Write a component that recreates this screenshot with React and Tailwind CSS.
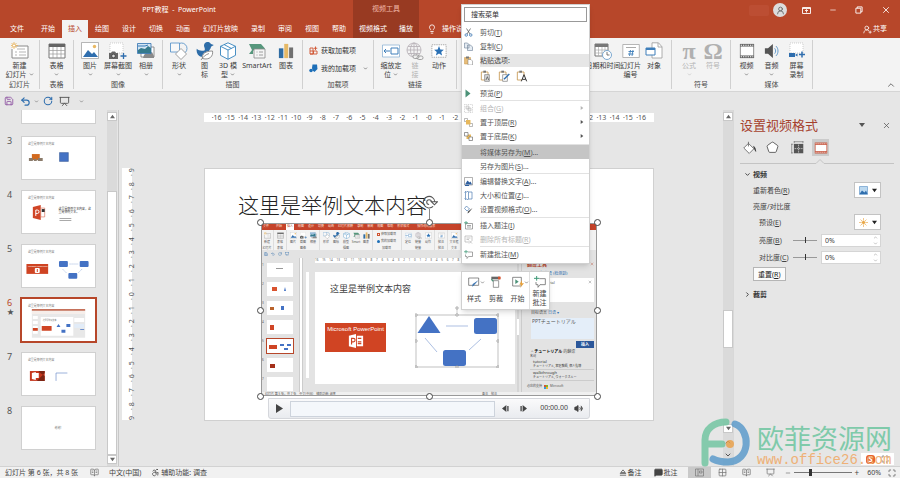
import { useState } from "react";
import {
	Accessibility,
	BookOpenText,
	ChevronDown,
	ChevronRight,
	ChevronUp,
	Grid2x2,
	Lightbulb,
	Maximize,
	MessageSquare,
	Minus,
	Pentagon,
	Presentation,
	RotateCw,
	Save,
	Undo2,
	UserRound,
	UserRoundPlus,
	Volume2,
	X,
} from "lucide-react";

const Svg = ({ size = 18, box = 18, children }) => (
	<svg
		width={size}
		height={size}
		viewBox={`0 0 ${box} ${box}`}
		fill="none"
		className="shrink-0"
		aria-hidden="true"
	>
		{children}
	</svg>
);

/* ---------- ribbon icons ---------- */

const icons = {
	newSlide: (
		<>
			<path d="M3 4h14v12H1V7" fill="#fff" stroke="#8a8a8a" />
			<path d="M6 7h8M4 10h2M8 10h7M4 13h2M8 13h7" stroke="#b5b5b5" />
			<path d="M3 0v7M0 3.500h7M.5 1l5 5M5.500 1l-5 5" stroke="#e8b35a" strokeWidth=".8" />
			<circle cx="3" cy="3.500" r="1.500" fill="#fff" stroke="#e8b35a" strokeWidth=".8" />
		</>
	),
	table: (
		<>
			<path d="M1 2h16v14H1z" fill="#fff" stroke="#777" />
			<path d="M1 2h16v3H1z" fill="#666" />
			<path d="M1 8.500h16M1 12h16M5 5v11M9 5v11M13 5v11" stroke="#999" strokeWidth=".7" />
		</>
	),
	picture: (
		<>
			<path d="M.5.5h17v16H.5z" fill="#fff" stroke="#9a9a9a" strokeWidth=".7" />
			<circle cx="13.500" cy="4.500" r="1.700" fill="#e9b862" />
			<path d="M2 15l5-7 4 4 2-2 4 5z" fill="#2f6eae" />
		</>
	),
	screenshot: (
		<>
			<path d="M1 1h13v10H1z" fill="#fff" stroke="#bbb" strokeDasharray="1 1" strokeWidth=".7" />
			<path d="M0 11h2l1-1.500h3L7 11h2v6H0z" fill="#666" />
			<circle cx="4.500" cy="14" r="1.800" fill="#ddd" stroke="#333" strokeWidth=".7" />
			<path d="M14.500 11v6M11.500 14h6" stroke="#2f6eae" strokeWidth="1.300" />
		</>
	),
	album: (
		<>
			<path d="M4 5h13v10H4z" fill="#fff" stroke="#777" strokeWidth=".8" />
			<path d="M7 13l4-4 2 2 2-1 2 4v2H6z" fill="#8a8a8a" />
			<path d="M.5 1.500H14v10H.5z" fill="#d6e6f3" stroke="#2f6eae" strokeWidth=".8" />
			<path d="M1 11V8l3-2 4 1 3-3 3 2v5z" fill="#357a8c" />
			<path d="M1 4h7l3-1" stroke="#357ab8" />
		</>
	),
	shapes: (
		<>
			<circle cx="11.500" cy="6.500" r="5.500" fill="#f3f3f3" stroke="#4b8bc5" strokeWidth=".8" />
			<path d="M.5 1h9v9h-9z" fill="#f8f8f8" stroke="#4b8bc5" strokeWidth=".8" />
			<path d="M11 6.500l5.500 5.500L11 17.500 5.500 12z" fill="#fff" stroke="#8a8a8a" strokeWidth=".8" />
		</>
	),
	duck: (
		<>
			<path
				d="M8 3.500a3.700 3.700 0 0 1 7-1.500l2.800 1L15 4.800c0 2-1.500 2.700-2 4.200-3 0-6 2-7.500 6C1.500 14 0 10 .8 6.800 3 8.800 5 9 8.500 8.500 9.500 7 8 5 8 3.500z"
				fill="#2e6da8"
			/>
			<path d="M6.500 16.500c-1-4.500 3-7.500 10-7.500 1 5-3 9.500-10 7.500z" fill="#fff" stroke="#777" strokeWidth=".8" />
			<path d="M5 18c2-3 4-5 8-6.500" stroke="#777" strokeWidth=".8" />
		</>
	),
	cube: (
		<g stroke="#3483bd" strokeWidth=".9">
			<path d="M9 .8l7.500 3.500v9L9 17.300l-7.500-4v-9z" fill="#fff" />
			<path d="M1.500 4.300L9 8l7.500-3.700M9 8v9.300M5 2.500l7.500 4" />
		</g>
	),
	smartArt: (
		<>
			<path d="M1 2h12l4 4.500-2 2H5V12H1l3-4z" fill="#56977c" />
			<path d="M6 7h11v9H6z" fill="#f5f5f5" stroke="#888" strokeWidth=".8" />
			<path d="M8.500 10h1M11 10h4M8.500 13h1M11 13h4" stroke="#888" strokeWidth=".8" />
		</>
	),
	chart: (
		<>
			<path d="M1 6h5v11H1z" fill="#2f6ca3" />
			<path d="M7 1h4.500v16H7z" fill="#e6b966" />
			<path d="M12.500 5H17v12h-4.500z" fill="#707070" />
		</>
	),
	zoomLink: (
		<>
			<path d="M.5 3h17v12H.5z" fill="#fff" stroke="#8fb4d4" strokeWidth=".8" />
			<path d="M9 6h7v6H9z" stroke="#3f7fba" />
			<path d="M8 9H2m2-2L2 9l2 2" stroke="#3f7fba" />
		</>
	),
	globe: (
		<g stroke="#b9b3b9" strokeWidth=".9">
			<circle cx="8" cy="8" r="7" />
			<ellipse cx="8" cy="8" rx="3.500" ry="7" />
			<path d="M1 8h14M2 4.500h12M2 11.500h12M8 1v14" />
			<rect x="7" y="13" width="6" height="3.500" rx="1.700" fill="#eee" stroke="#999" />
			<rect x="11" y="14" width="6" height="3.500" rx="1.700" stroke="#999" />
		</g>
	),
	action: (
		<>
			<path d="M1 2h16v14H1z" fill="#fff" stroke="#888" strokeDasharray="1.500 1" strokeWidth=".8" />
			<path d="M9 3.500l1.500 3.800 4 .2-3 2.600 1 4L9 11.800l-3.500 2.300 1-4-3-2.600 4-.2z" fill="#2b71b5" />
		</>
	),
	dateTime: (
		<>
			<path d="M1 2h13v12H1z" fill="#fff" stroke="#777" />
			<path d="M1 2h13v3H1z" fill="#777" />
			<path d="M1 8h13M1 11h13M4.500 5v9M8 5v9M11 5v9" stroke="#aaa" strokeWidth=".7" />
			<circle cx="13" cy="13" r="4.500" fill="#fff" stroke="#7aa7cf" />
			<path d="M13 10v3h2.500" stroke="#555" strokeWidth=".8" />
		</>
	),
	slideNumber: (
		<>
			<path d="M.8 2.500h16.500v13H.8z" fill="#fff" stroke="#a5a5a5" strokeWidth=".8" />
			<path d="M4 5.500h10" stroke="#aaa" />
			<path d="M6.500 9.500h5.500M6 12h5.500M8.500 8l-1 6M11 8l-1 6" stroke="#3f7fba" strokeWidth=".9" />
		</>
	),
	object: (
		<>
			<path d="M7 .8h6.500l3.500 4V16H7z" fill="#fff" stroke="#999" strokeWidth=".8" />
			<path d="M13 1v4h4" stroke="#999" strokeWidth=".8" />
			<path d="M1 6h9v7H1z" fill="#fff" stroke="#3f7fba" />
			<path d="M1 6h9v2H1z" fill="#3f7fba" />
		</>
	),
	video: (
		<>
			<path d="M1 1h16v16H1z" fill="#666" />
			<path d="M1.800 4h14.400v10H1.800z" fill="#fff" />
			<path d="M2 2.500h14M2 15.500h14" stroke="#fff" strokeWidth="1.300" strokeDasharray="1.300 1.300" />
		</>
	),
	audio: (
		<>
			<path d="M1 6h3.500L10 1v16l-5.500-5H1z" fill="#555" />
			<path d="M12 6c1.500 2 1.500 4 0 6M13.500 3.500c3 3 3 8 0 11" stroke="#5490c5" />
		</>
	),
	record: (
		<>
			<path d="M2 1h13v10H2z" fill="#fff" stroke="#bbb" strokeDasharray="1 1" strokeWidth=".7" />
			<path d="M1 11h6v4H1zM7 13l2.500-1.500v3z" fill="#2f6eae" />
			<path d="M14 9.500v6M11 12.500h6" stroke="#2f6eae" strokeWidth="1.500" />
		</>
	),
};

const Glyph = ({ children }) => (
	<span className="flex h-[18px] items-center font-['Liberation_Serif',serif] text-[24px] font-bold text-[#b0b0b0]">
		{children}
	</span>
);

const Caret = ({ className = "" }) => (
	<ChevronDown size={5} strokeWidth={2.5} className={`inline-block shrink-0 ${className}`} />
);

const RibbonButton = ({ icon, lines, width, caret, disabled, size = 18 }) => (
	<button
		className={`flex shrink-0 flex-col items-center text-[7px] leading-[9px] whitespace-nowrap ${width} ${
			disabled ? "text-[#b3b3b3]" : "text-[#3b3b3b]"
		}`}
		disabled={disabled}
	>
		<span className="mb-[1px] flex h-[18px] items-center">
			{typeof icon === "string" ? <Svg size={size}>{icons[icon]}</Svg> : icon}
		</span>
		{lines.map((line, i) => (
			<span key={line} className="flex items-center justify-center gap-[2px]">
				{line}
				{caret === "inline" && i === lines.length - 1 && <Caret />}
			</span>
		))}
		{caret === "below" && (
			<span className="flex h-[9px] items-center">
				<Caret />
			</span>
		)}
	</button>
);

const RibbonGroup = ({ label, pad = "", children }) => (
	<section className="my-[2px] flex shrink-0 flex-col border-r border-[#d0d0d0] pt-[2px]">
		<div className={`flex flex-1 ${pad}`}>{children}</div>
		<h2 className="h-[9px] text-center text-[7px] leading-[9px] text-[#4a4a4a]">{label}</h2>
	</section>
);

const Ribbon = () => (
	<div className="flex h-[54px] border-b border-[#d5d5d5] bg-[#f3f3f3]">
		<RibbonGroup label="幻灯片">
			<RibbonButton icon="newSlide" lines={["新建", "幻灯片"]} width="w-[39px]" caret="inline" />
		</RibbonGroup>
		<RibbonGroup label="表格">
			<RibbonButton icon="table" lines={["表格"]} width="w-[33px]" caret="below" />
		</RibbonGroup>
		<RibbonGroup label="图像" pad="px-[2px]">
			<RibbonButton icon="picture" lines={["图片"]} width="w-[28px]" caret="below" />
			<RibbonButton icon="screenshot" lines={["屏幕截图"]} width="w-[28px]" caret="below" />
			<RibbonButton icon="album" lines={["相册"]} width="w-[28px]" caret="below" />
		</RibbonGroup>
		<RibbonGroup label="插图" pad="pl-[2px] pr-[4px]">
			<RibbonButton icon="shapes" lines={["形状"]} width="w-[28px]" caret="below" />
			<RibbonButton icon="duck" lines={["图", "标"]} width="w-[23px]" />
			<RibbonButton icon="cube" lines={["3D 模", "型"]} width="w-[24px]" caret="inline" />
			<RibbonButton icon="smartArt" lines={["SmartArt"]} width="w-[34px]" />
			<RibbonButton icon="chart" lines={["图表"]} width="w-[24px]" size={16} />
		</RibbonGroup>
		<RibbonGroup label="加载项" pad="w-[70px] flex-col gap-[9px] pt-[4px] pl-[6px]">
			<button className="flex items-center gap-[3px] text-[7px] leading-[9px] text-[#333]">
				<Svg size={9}>
					<path d="M2 4h6v12H2zM2 10h14v6H2M9 10v6M13 1v7M9.500 4.500h7" stroke="#cf5330" strokeWidth="1.800" />
				</Svg>
				获取加载项
			</button>
			<button className="flex items-center gap-[3px] text-[7px] leading-[9px] text-[#333]">
				<Svg size={9}>
					<path d="M7 1h9l1 9-6 6-4-3-1-5z" fill="#1d6fb8" />
					<circle cx="4" cy="13" r="3.500" fill="#1d6fb8" />
				</Svg>
				我的加载项
				<Caret className="ml-[4px]" />
			</button>
		</RibbonGroup>
		<RibbonGroup label="链接" pad="pl-[5px] pr-[5px]">
			<RibbonButton icon="zoomLink" lines={["缩放定", "位"]} width="w-[24px]" caret="inline" />
			<RibbonButton icon="globe" lines={["链", "接"]} width="w-[24px]" disabled />
			<RibbonButton icon="action" lines={["动作"]} width="w-[24px]" size={16} />
		</RibbonGroup>
		<RibbonGroup label="文本" pad="pr-[4px] pl-[129px]">
			<RibbonButton icon="dateTime" lines={["日期和时间"]} width="w-[34px]" />
			<RibbonButton icon="slideNumber" lines={["幻灯片", "编号"]} width="w-[21px]" />
			<RibbonButton icon="object" lines={["对象"]} width="w-[26px]" />
		</RibbonGroup>
		<RibbonGroup label="符号" pad="px-[5px]">
			<RibbonButton icon={<Glyph>π</Glyph>} lines={["公式"]} width="w-[24px]" caret="below" disabled />
			<RibbonButton icon={<Glyph>Ω</Glyph>} lines={["符号"]} width="w-[24px]" disabled />
		</RibbonGroup>
		<RibbonGroup label="媒体" pad="px-[3px]">
			<RibbonButton icon="video" lines={["视频"]} width="w-[25px]" caret="below" size={16} />
			<RibbonButton icon="audio" lines={["音频"]} width="w-[25px]" caret="below" size={16} />
			<RibbonButton icon="record" lines={["屏幕", "录制"]} width="w-[25px]" />
		</RibbonGroup>
		<button className="mt-auto mr-[4px] mb-[1px] ml-auto text-[#555]" aria-label="折叠功能区">
			<ChevronUp size={10} strokeWidth={2} />
		</button>
	</div>
);

/* ---------- title bar and tabs ---------- */

const tabs = ["开始", "插入", "绘图", "设计", "切换", "动画", "幻灯片放映", "录制", "审阅", "视图", "帮助"];

const Header = () => {
	const [active, setActive] = useState("插入");
	return (
		<header className="flex h-[38px] bg-[#b7472a] text-[7px] text-white">
			<div className="flex shrink-0 flex-col">
				<h1 className="h-[20px] pl-[6px] text-center leading-[20px]">PPT教程&nbsp; -&nbsp; PowerPoint</h1>
				<nav className="flex h-[18px] gap-[1px]">
					<button className="px-[10px]">文件</button>
					{tabs.map((tab) => (
						<button
							key={tab}
							onClick={() => setActive(tab)}
							className={`px-[6px] ${tab === active ? "bg-[#f3f3f3] text-[#b7472a]" : ""}`}
						>
							{tab}
						</button>
					))}
				</nav>
			</div>
			<div className="ml-[1px] flex shrink-0 flex-col bg-[#983a22]">
				<p className="h-[20px] text-center leading-[18px] text-[#f0b8a8]">视频工具</p>
				<nav className="flex h-[18px]">
					<button className="px-[6px]">视频格式</button>
					<button className="px-[6px]">播放</button>
				</nav>
			</div>
			<div className="flex flex-1 flex-col">
				<div className="flex h-[20px] items-center justify-end pr-[9px]">
					<span className="mr-[4px] h-[11px] w-[20px] rounded-[2px] bg-[#bc4e33]" />
					<button
						className="flex size-[14px] items-center justify-center rounded-full bg-[#dcdcdc] text-[#555]"
						aria-label="账户"
					>
						<UserRound size={9} />
					</button>
					<button className="ml-[15px]" aria-label="功能区显示选项">
						<Svg size={9}>
							<path d="M1 3h16v12H1zM1 5h16M9 13V8M6 10l3-3 3 3" stroke="#fff" strokeWidth="1.800" />
						</Svg>
					</button>
					<button className="ml-[18px]" aria-label="最小化">
						<Minus size={8} />
					</button>
					<button className="ml-[18px]" aria-label="还原">
						<Svg size={8}>
							<path d="M5 5V2h11v11h-3M2 5h11v11H2z" stroke="#fff" strokeWidth="2" />
						</Svg>
					</button>
					<button className="ml-[18px]" aria-label="关闭">
						<X size={10} />
					</button>
				</div>
				<div className="flex h-[18px] items-center justify-between pr-[13px] pl-[8px]">
					<button className="flex items-center gap-[5px]">
						<Lightbulb size={10} />
						操作说明搜索
					</button>
					<button className="flex items-center gap-[1px]">
						<UserRoundPlus size={9} />
						共享
					</button>
				</div>
			</div>
		</header>
	);
};

const QuickAccess = () => (
	<div className="flex h-[18px] items-center bg-[#e6e6e6] pl-[4px] text-[#555]">
		<button aria-label="保存">
			<Save size={10} className="text-[#8c4fa0]" />
		</button>
		<button className="ml-[6px]" aria-label="撤消">
			<Undo2 size={11} strokeWidth={2.5} className="text-[#2f6eae]" />
		</button>
		<Caret className="ml-[3px]" />
		<button className="ml-[4px]" aria-label="恢复">
			<RotateCw size={10} strokeWidth={2.5} className="text-[#2f6eae]" />
		</button>
		<button className="ml-[6px]" aria-label="从头开始放映">
			<Presentation size={11} />
		</button>
		<Caret className="ml-[9px]" />
	</div>
);

/* ---------- slide thumbnails ---------- */

const Arrow = ({ d }) => <path d={d} stroke="#7c9bd2" strokeWidth=".5" strokeDasharray="1.500 .5" />;

const PptMark = ({ x, y }) => (
	<g transform={`translate(${x} ${y})`}>
		<path d="M0 2l8-2v15l-8-2z" fill="#d04526" />
		<path d="M8 3h4v9H8z" fill="#fff" stroke="#d04526" strokeWidth=".5" />
		<path d="M9 4h3v3H9z" fill="#333" />
		<path d="M3 11V5h1.500a1.700 1.700 0 0 1 0 3.500H3" stroke="#fff" />
	</g>
);

const Thumb = ({ children, title = true }) => (
	<svg viewBox="0 0 74 42" className="block h-[42px] w-full bg-white" fill="none">
		{title && (
			<text x="6" y="8" fontSize="3" fill="#777">
				这里是举例文本内容
			</text>
		)}
		{children}
	</svg>
);

const thumbs = [
	{
		n: 3,
		art: (
			<>
				<path d="M10 17h8v6h-8z" fill="#d2691e" />
				<path d="M7 21h4v3H7zM12 22h3v2h-3zM16 21h5v3h-5z" fill="#8b7b6b" />
				<path d="M38 15.500h9v9h-9z" fill="#4472c4" stroke="#2f528f" strokeWidth=".5" />
			</>
		),
	},
	{
		n: 4,
		art: (
			<>
				<PptMark x={11} y={14} />
				<text x="37" y="19" fontSize="3" fill="#333">
					这里是举例文本内容，这
				</text>
				<text x="37" y="22" fontSize="3" fill="#333">
					里是举例文本。
				</text>
				<path d="M38 27h12v1H38zM38 29h12v1H38z" fill="#aaa" />
			</>
		),
	},
	{
		n: 5,
		art: (
			<>
				<path d="M4.500 19h22v10h-22z" fill="#cf4423" />
				<text x="6" y="22" fontSize="2" fill="#fff">
					Microsoft PowerPoint
				</text>
				<rect x="13" y="23" width="5" height="5" rx="1" fill="#fff" />
				<path d="M15 24h1v3h-1z" fill="#cf4423" />
				<rect x="37.500" y="16" width="9" height="6" rx="1" fill="#4472c4" />
				<rect x="58.500" y="16" width="9" height="6" rx="1" fill="#4472c4" />
				<rect x="47" y="28" width="9" height="6" rx="1" fill="#4472c4" />
				<Arrow d="M48 19h9M61 24l-4 4M45 28l-4-4" />
			</>
		),
	},
	{
		n: 6,
		art: (
			<>
				<path d="M10 10h54v29H10z" fill="#e8e8e8" />
				<path d="M10 10h54v1.500H10z" fill="#b7472a" />
				<path d="M10 11.500h54V15H10z" fill="#f6eeea" />
				<path d="M19 18h33v19H19zM11 17h5v3h-5zM11 22h5v3h-5zM11 27h5v3h-5zM11 32h5v3h-5zM53 19h10v4H53z" fill="#fff" />
				<path d="M20 27h10v5H20zM11 29h5v3h-5z" fill="#cf4423" />
				<path d="M35 28l2-3 2 3zM45 25h4v3h-4zM40 31h4v3h-4zM59 30h4v1h-4z" fill="#4472c4" />
				<path d="M53 25h10v4H53z" fill="#e2ecf8" />
				<text x="21" y="22" fontSize="2" fill="#777">
					这里是举例文本
				</text>
			</>
		),
	},
	{
		n: 7,
		art: (
			<>
				<path d="M8 18h15v10H8z" fill="#c5371d" />
				<path d="M15 28l8-8v8zM17 19l6 4v-5h-6z" fill="#7d2514" />
				<path d="M10 20l4-1v8l-4-1zM14 20h3v5h-3z" fill="#fff" />
				<path d="M34.500 28v-8H46" stroke="#6f8fca" strokeWidth=".7" />
			</>
		),
	},
	{
		n: 8,
		title: false,
		art: (
			<text x="33" y="22" fontSize="3" fill="#777">
				谢谢!
			</text>
		),
	},
];

const ThumbPanel = ({ current, onSelect }) => (
	<aside className="w-[107px] shrink-0 overflow-hidden bg-[#e6e6e6]">
		<div className="mb-[12px] ml-[21px] h-[14px] w-[75px] border border-t-0 border-[#cfcfcf] bg-white" />
		<ol>
			{thumbs.map(({ n, title, art }) => (
				<li key={n} className="mb-[10px] flex h-[44px] items-center">
					<span
						className={`w-[20px] self-start pl-[7px] text-[9px] leading-[9px] ${
							n === current ? "text-[#b7472a]" : "text-[#555]"
						}`}
					>
						{n}
						{n === 6 && <span className="block text-[7px] leading-[9px] text-[#555]">★</span>}
					</span>
					<button
						onClick={() => onSelect(n)}
						aria-label={`幻灯片 ${n}`}
						className={
							n === current ? "w-[77px] border-2 border-[#b7472a]" : "mx-[1px] w-[75px] border border-[#d0d0d0]"
						}
					>
						<Thumb title={title}>{art}</Thumb>
					</button>
				</li>
			))}
		</ol>
	</aside>
);

const Scrollbar = ({ before, thumb, after, children }) => (
	<div className="flex w-[10px] shrink-0 flex-col bg-[#dadada] py-[2px]">
		<button className="flex h-[9px] items-center justify-center border border-[#c8c8c8] bg-white" aria-label="向上滚动">
			<Svg size={5} box={6}>
				<path d="M0 5l3-4 3 4z" fill="#666" />
			</Svg>
		</button>
		<div className={before} />
		<div className={`border border-[#c8c8c8] bg-white ${thumb}`} />
		<div className={after} />
		<button className="flex h-[9px] items-center justify-center border border-[#c8c8c8] bg-white" aria-label="向下滚动">
			<Svg size={5} box={6}>
				<path d="M0 1l3 4 3-4z" fill="#666" />
			</Svg>
		</button>
		{children}
	</div>
);

/* ---------- video placed on the slide ---------- */

const miniGroups = [
	{ label: "幻灯片", items: [["newSlide", "新建"]] },
	{ label: "表格", items: [["table", "表格"]] },
	{ label: "图像", items: [["picture", "图片"], ["screenshot", "截图"], ["album", "相册"]] },
	{ label: "插图", items: [["shapes", "形状"], ["duck", "图标"], ["cube", "模型"], ["smartArt", "Smart"], ["chart", "图表"]] },
];

const miniGroupsRight = [
	{ label: "链接", items: [["zoomLink", "定位"], ["globe", "链接"], ["action", "动作"]] },
	{ label: "批注", items: [["slideNumber", "批注"]] },
	{ label: "文本", items: [["picture", "文本框"]] },
];

const MiniGroup = ({ label, items }) => (
	<div className="flex shrink-0 flex-col justify-between border-r border-[#ddd] px-[1px] pt-[2px] text-center">
		<div className="flex">
			{items.map(([icon, text]) => (
				<span key={text} className="flex w-[10px] flex-col items-center gap-[1px]">
					<Svg size={7}>{icons[icon]}</Svg>
					{text}
				</span>
			))}
		</div>
		<span>{label}</span>
	</div>
);

const MiniDiagram = () => (
	<svg viewBox="0 0 84 62" className="w-[84px] shrink-0" fill="none">
		<path d="M42 8V2" stroke="#999" strokeWidth=".5" />
		<path d="M1 9h82v52H1z" stroke="#999" strokeWidth=".6" />
		<path d="M14 10l11.500 17h-23z" fill="#4472c4" />
		<rect x="59" y="12" width="23" height="16" rx="2.500" fill="#4472c4" />
		<rect x="28" y="44" width="23" height="16" rx="2.500" fill="#4472c4" />
		<path d="M31 20h22M66 33L54 44M22 46L10 32" stroke="#8aa5d6" strokeWidth=".7" />
		{[
			[1, 9],
			[42, 9],
			[83, 9],
			[1, 35],
			[83, 35],
			[1, 61],
			[42, 61],
			[83, 61],
			[42, 2],
		].map(([x, y]) => (
			<circle key={`${x}-${y}`} cx={x} cy={y} r="1.200" fill="#fff" stroke="#777" strokeWidth=".6" />
		))}
	</svg>
);

const VideoFrame = () => (
	<div className="flex h-[173px] flex-col overflow-hidden bg-[#e3e3e3] text-[3px] leading-[4px] text-[#555]">
		<div className="flex h-[7px] items-stretch gap-[4px] bg-[#c5432a] px-[2px] text-[3px] leading-[7px] whitespace-nowrap text-[#ffe2da]">
			<span className="mr-[3px]">文件</span>
			<span>开始</span>
			<span className="bg-white px-[1px] text-[#b7472a]">插入</span>
			<span>绘图</span>
			<span>设计</span>
			<span>切换</span>
			<span>动画</span>
			<span>幻灯片放映</span>
			<span>录制</span>
			<span>审阅</span>
			<span>视图</span>
			<span>帮助</span>
			<span>形状格式</span>
			<span className="ml-[4px]">操作说明搜索</span>
		</div>
		<div className="flex h-[20px] bg-[#f3f3f3]">
			{miniGroups.map((group) => (
				<MiniGroup key={group.label} {...group} />
			))}
			<div className="flex w-[29px] shrink-0 flex-col justify-between border-r border-[#ddd] pt-[2px] pl-[4px]">
				<span className="flex items-center gap-[1px]">
					<span className="size-[3px] border border-[#cf5330]" />
					获取加载项
				</span>
				<span className="flex items-center gap-[1px]">
					<span className="size-[3px] rounded-full bg-[#1d6fb8]" />
					我的加载项
				</span>
				<span className="pl-[5px]">加载项</span>
			</div>
			{miniGroupsRight.map((group) => (
				<MiniGroup key={group.label} {...group} />
			))}
		</div>
		<div className="flex h-[8px] items-center gap-[3px] pl-[3px] text-[#2f6eae]">
			<Save size={4} />
			<Undo2 size={4} />
			<RotateCw size={4} />
			<Presentation size={4} />
		</div>
		<div className="flex min-h-0 flex-1">
			<div className="flex w-[38px] shrink-0 flex-col gap-[5px] pt-[5px] pl-[1px]">
				{[1, 2, 3, 4, 5, 6, 7].map((n) => (
					<div key={n} className="flex gap-[3px]">
						<span className="w-[2px]">{n}</span>
						<svg viewBox="0 0 26 14" className={`w-[26px] bg-white ${n === 5 ? "outline-1 outline-[#b7472a]" : ""}`}>
							{n === 1 && <path d="M9 5h7v1H9z" fill="#999" />}
							{n === 2 && <path d="M5 5h5v4H5z" fill="#d9532f" />}
							{n === 2 && <path d="M18 5l1 4h-2z" fill="#4472c4" />}
							{n === 3 && <path d="M3 6h4v3H3z" fill="#b9622b" />}
							{n === 3 && <path d="M14 5h3v4h-3z" fill="#4472c4" />}
							{n === 4 && <path d="M3 5h4v5H3z" fill="#d04526" />}
							{n === 5 && <path d="M2 6h8v4H2z" fill="#cf4423" />}
							{n === 5 && <path d="M13 5h4v2h-4zM20 5h4v2h-4zM17 9h4v2h-4z" fill="#4472c4" />}
							{n === 6 && <path d="M3 6h5v4H3z" fill="#a5301a" />}
						</svg>
					</div>
				))}
			</div>
			<div className="w-[4px] shrink-0 border-x border-[#ccc] bg-white" />
			<div className="my-[14px] ml-[3px] w-[3px] shrink-0 bg-white" />
			<div className="flex min-w-0 flex-1 flex-col pl-[6px]">
				<div className="mb-[9px] flex h-[5px] justify-between bg-white leading-[5px]">
					{Array.from({ length: 33 }, (_, i) => (
						<span key={i}>{Math.abs(16 - i)}</span>
					))}
				</div>
				<div className="h-[112px] bg-white pt-[12px] pr-[16px] pl-[10px]">
					<p className="ml-[5px] text-[9px] leading-[9px] text-[#444]">这里是举例文本内容</p>
					<div className="mt-[13px] flex items-start justify-between">
						<div className="mt-[17px] flex h-[29px] w-[61px] shrink-0 flex-col items-center bg-[#d04423] pt-[3px] text-white">
							<p className="font-['Liberation_Sans',sans-serif] text-[6px] leading-[7px] whitespace-nowrap">
								Microsoft PowerPoint
							</p>
							<Svg size={16}>
								<path d="M1 3l8-2v16l-8-2zM10 3h7v12h-7z" fill="#fff" />
								<path d="M4 13V6h2a2 2 0 0 1 0 4H4M11 6h4M11 10h4M11 12h4" stroke="#d04423" strokeWidth="1.300" />
							</Svg>
						</div>
						<MiniDiagram />
					</div>
				</div>
			</div>
			<div className="mx-[2px] flex w-[2px] shrink-0 items-center bg-[#d5d5d5]">
				<span className="mt-[4px] h-[16px] w-full bg-white" />
			</div>
			<div className="w-[76px] shrink-0 border-l border-[#ccc] pt-[4px] pr-[3px] pl-[5px] text-[4px] leading-[5px] whitespace-nowrap">
				<p className="flex justify-between text-[5px] font-bold text-[#b7472a]">
					翻译工具 <X size={4} />
				</p>
				<div className="ml-[4px]">
					<p className="mt-[4px] text-[#2f6eae]">源语言 英语 (检测到)</p>
					<div className="mt-[2px] flex h-[24px] justify-between bg-white p-[2px]">
						PPT tutorial <X size={4} />
					</div>
					<p className="mt-[8px] text-[#2f6eae]">
						<span className="text-[#555]">目标语言</span> 日语 ▾
					</p>
					<div className="mt-[3px] h-[21px] bg-[#e4eef9] pt-[1px] pl-[1px] text-[5px]">PPTチュートリアル</div>
					<div className="mt-[2px] ml-auto h-[7px] w-[18px] bg-[#2b579a] text-center font-bold leading-[7px] text-white">
						插入
					</div>
					<p className="mt-[1px]">
						^ <b className="text-black">チュートリアル</b> 的翻译
					</p>
				</div>
				<div className="ml-[3px] text-[3px] text-[#333]">
					<p>名词</p>
					<p className="pl-[3px] text-[4px]">tutorial</p>
					<p className="border-b border-[#ccc] pl-[3px]">チュートリアル, 家庭教師, 個人指導</p>
					<p className="pl-[3px] text-[4px]">walkthrough</p>
					<p className="border-b border-[#ccc] pl-[3px]">チュートリアル, ウォークスルー</p>
				</div>
				<p className="mt-[3px] flex items-center gap-[2px] text-[3px]">
					必应的支持
					<Svg size={4} box={4}>
						<path d="M0 0h2v2H0z" fill="#d9532f" />
						<path d="M2 0h2v2H2z" fill="#7db928" />
						<path d="M0 2h2v2H0z" fill="#2f9be0" />
						<path d="M2 2h2v2H2z" fill="#f2b52a" />
					</Svg>
					Microsoft
				</p>
			</div>
		</div>
		<div className="flex h-[4px] items-center justify-between bg-[#f0f0f0] pr-[100px] pl-[4px] text-[3px]">
			<span>幻灯片 第 5 张，共 7 张　中文(中国)　辅助功能: 调查</span>
			<span>备注　批注</span>
		</div>
	</div>
);

const Handle = ({ at }) => (
	<span className={`absolute size-[7px] rounded-full border border-[#444] bg-white ${at}`} />
);

const SelectedVideo = () => (
	<div className="relative outline-1 -outline-offset-1 outline-[#999]">
		<VideoFrame />
		<span className="absolute -top-[14px] left-1/2 h-[14px] w-px bg-[#888]" />
		<span className="absolute -top-[28px] left-1/2 -ml-[7px]">
			<Svg size={16}>
				<path
					d="M14.500 8A6.500 6.500 0 1 0 12.500 12.800M10.700 8A2.700 2.700 0 1 0 8 10.700M10.500 7.500h7L14 11z"
					stroke="#555"
					strokeWidth="1.200"
				/>
			</Svg>
		</span>
		<Handle at="-top-[4px] -left-[4px]" />
		<Handle at="-top-[4px] left-1/2 -ml-[3px]" />
		<Handle at="-top-[4px] -right-[4px]" />
		<Handle at="top-1/2 -left-[4px] -mt-[3px]" />
		<Handle at="top-1/2 -right-[4px] -mt-[3px]" />
		<Handle at="-bottom-[4px] -left-[4px]" />
		<Handle at="-bottom-[4px] left-1/2 -ml-[3px]" />
		<Handle at="-right-[4px] -bottom-[4px]" />
	</div>
);

const PlayerBar = () => (
	<div className="mx-[63px] mt-[2px] flex h-[21px] items-center rounded-b-[3px] border border-[#d5d7dc] bg-linear-to-b from-[#fafafb] to-[#e9ebef] px-[6px] text-[#444]">
		<button aria-label="播放">
			<Svg size={9} box={9}>
				<path d="M1 0l7 4.500L1 9z" fill="#444" />
			</Svg>
		</button>
		<div className="ml-[6px] h-[16px] flex-1 border border-[#cdd3dc] bg-[#f4f7fb]" />
		<button className="ml-[7px]" aria-label="后退">
			<Svg size={7} box={8}>
				<path d="M5 0v8L0 4zM6 1h1.500v6H6z" fill="#444" />
			</Svg>
		</button>
		<button className="ml-[11px]" aria-label="前进">
			<Svg size={7} box={8}>
				<path d="M3 0v8l5-4zM.5 1H2v6H.5z" fill="#444" />
			</Svg>
		</button>
		<span className="ml-[13px] text-[7px]">00:00.00</span>
		<button className="ml-[6px]" aria-label="音量">
			<Volume2 size={9} fill="#444" />
		</button>
	</div>
);

const rulerNumbers = (max) => Array.from({ length: max * 2 + 1 }, (_, i) => Math.abs(max - i));

const Editor = () => (
	<main className="flex min-w-0 flex-1 bg-[#e6e6e6]">
		<div className="mt-[58px] ml-[3px] flex h-[252px] w-[9px] shrink-0 rotate-180 justify-between bg-white py-[5px] text-[7px] leading-[9px] text-[#555] [writing-mode:vertical-rl]">
			{rulerNumbers(9).map((n, i) => (
				<span key={i}>{i === 0 ? n : `· ${n}`}</span>
			))}
		</div>
		<div className="flex min-w-0 flex-1 flex-col pr-[69px] pl-[72px]">
			<div className="mt-[3px] flex h-[9px] bg-white px-[6px] text-[7px] leading-[9px] text-[#555]">
				{rulerNumbers(16).map((n, i) => (
					<span key={i} className="w-0 flex-1 text-center whitespace-nowrap">
						·{n}
					</span>
				))}
			</div>
			<article className="mt-[46px] border border-[#d0d0d0] bg-white pb-[1px]">
				<h2 className="mt-[24px] mb-[6px] ml-[33px] text-[21px] leading-[24px] font-light whitespace-nowrap text-[#222]">
					这里是举例文本内容
				</h2>
				<div className="mx-[56px]">
					<SelectedVideo />
				</div>
				<PlayerBar />
			</article>
		</div>
	</main>
);

/* ---------- format pane ---------- */

const SliderRow = ({ label, hotkey, id }) => {
	const [value, setValue] = useState(0);
	return (
		<div className="mb-[3px] flex h-[14px] items-center pl-[6px]">
			<label htmlFor={id} className="flex-1">
				{label}(<u>{hotkey}</u>)
			</label>
			<input
				type="range"
				min="-100"
				max="100"
				value={value}
				onChange={(e) => setValue(Number(e.target.value))}
				aria-label={label}
				className="mr-[4px] h-px w-[24px] appearance-none bg-[#999] [&::-webkit-slider-thumb]:h-[6px] [&::-webkit-slider-thumb]:w-[1px] [&::-webkit-slider-thumb]:appearance-none [&::-webkit-slider-thumb]:bg-[#333]"
			/>
			<div className="flex h-[13px] w-[60px] items-center border border-[#d5d5d5] bg-white pr-[2px] pl-[3px]">
				<input
					id={id}
					value={`${value}%`}
					onChange={(e) => setValue(parseInt(e.target.value, 10) || 0)}
					className="w-0 flex-1 text-[7px] outline-none"
				/>
				<span className="flex flex-col gap-[1px] text-[#777]">
					<ChevronUp size={5} />
					<ChevronDown size={5} />
				</span>
			</div>
		</div>
	);
};

const DropButton = ({ label, children }) => (
	<button
		aria-label={label}
		className="flex h-[16px] w-[27px] items-center justify-center gap-[4px] border border-[#c3c3c3] bg-white"
	>
		{children}
		<Svg size={5} box={6}>
			<path d="M0 1h6L3 5z" fill="#222" />
		</Svg>
	</button>
);

const FormatPane = () => (
	<aside className="w-[167px] shrink-0 border-l border-[#d8d8d8] bg-[#e6e6e6] px-[6px] pt-[7px] text-[7px] leading-[9px] text-[#444]">
		<div className="flex items-center text-[#555]">
			<h2 className="flex-1 text-[13px] leading-[16px] text-[#a5402d]">设置视频格式</h2>
			<button aria-label="任务窗格选项">
				<Svg size={6} box={6}>
					<path d="M0 1h6L3 5z" fill="#555" />
				</Svg>
			</button>
			<button className="mr-[3px] ml-[17px]" aria-label="关闭窗格">
				<X size={9} />
			</button>
		</div>
		<div className="mt-[6px] flex items-center">
			<button className="ml-[3px]" aria-label="填充与线条">
				<Svg size={14}>
					<path d="M7 3l7 7-6 6-7-7zM7 7V1" fill="#fff" stroke="#666" strokeWidth="1.100" />
					<path d="M13 6c3 1 4 5 4 8-2-1-2-3-3-4z" fill="#444" />
				</Svg>
			</button>
			<button className="ml-[9px]" aria-label="效果">
				<Pentagon size={13} fill="#fff" strokeWidth={1.5} />
			</button>
			<button className="ml-[12px]" aria-label="大小与属性">
				<Svg size={13}>
					<path d="M4 4h13v13H4z" fill="#555" />
					<path d="M10.500 5v11M5 10.500h11" stroke="#ddd" strokeDasharray="2 1" />
					<path d="M1 4v13M4 1h13M0 4.500h3M0 16.500h3M4.500 0v3M16.500 0v3" stroke="#777" />
				</Svg>
			</button>
			<button className="ml-[8px] flex size-[17px] items-center justify-center bg-[#cbcbcb]" aria-label="视频">
				<Svg size={14}>
					<path d="M1 2h16v14H1z" fill="#c5513a" />
					<path d="M2 5h14v8H2z" fill="#fff" />
					<path d="M2 3.500h14M2 14.500h14" stroke="#fff" strokeWidth="1.200" strokeDasharray="1.300 1.300" />
				</Svg>
			</button>
		</div>
		<svg viewBox="0 0 154 8" className="block w-full" fill="none">
			<path d="M0 7.500h76l4-4 4 4h70" stroke="#c4c4c4" />
		</svg>
		<button className="mt-[6px] flex items-center gap-[2px] pl-[4px] font-bold text-[#333]">
			<ChevronDown size={7} strokeWidth={3} />
			视频
		</button>
		<div className="px-[13px]">
			<div className="mt-[3px] flex h-[16px] items-center justify-between">
				<span>
					重新着色(<u>R</u>)
				</span>
				<DropButton label="重新着色">
					<Svg size={9}>
						<path d="M1 1h16v16H1z" fill="#bcd9f0" stroke="#3d7dbb" />
						<path d="M1 16l5-7 5 4 3-4 3 7z" fill="#2f6eae" />
					</Svg>
				</DropButton>
			</div>
			<p className="flex h-[16px] items-center">亮度/对比度</p>
			<div className="mb-[3px] flex h-[16px] items-center justify-between pl-[6px]">
				<span>
					预设(<u>E</u>)
				</span>
				<DropButton label="预设">
					<Svg size={9}>
						<path d="M9 0v18M0 9h18M3 3l12 12M15 3L3 15" stroke="#e9a94a" strokeWidth="1.300" />
						<circle cx="9" cy="9" r="4" fill="#e9a94a" stroke="#fff" />
					</Svg>
				</DropButton>
			</div>
			<SliderRow label="亮度" hotkey="B" id="brightness" />
			<SliderRow label="对比度" hotkey="C" id="contrast" />
			<button className="flex h-[14px] items-center border border-[#b5b5b5] bg-[#fbfbfb] px-[4px] text-[#222]">
				重置(<u>R</u>)
			</button>
		</div>
		<button className="mt-[9px] flex items-center gap-[2px] pl-[4px] font-bold text-[#333]">
			<ChevronRight size={7} strokeWidth={3} />
			裁剪
		</button>
	</aside>
);

/* ---------- status bar ---------- */

const StatusBar = () => (
	<footer className="flex h-[12px] items-center border-t border-[#d2d2d2] bg-[#f1f1f1] pl-[5px] text-[7px] leading-[11px] whitespace-nowrap text-[#444]">
		<span>幻灯片 第 6 张，共 8 张</span>
		<BookOpenText size={9} className="mr-[10px] ml-[12px] text-[#777]" />
		<span>中文(中国)</span>
		<button className="ml-[10px] flex items-center gap-[1px]">
			<Accessibility size={9} />
			辅助功能: 调查
		</button>
		<button className="ml-auto flex items-center gap-[1px]">
			<Svg size={8}>
				<path d="M9 2l5 6H4zM2 10h14M2 14h14" stroke="#555" strokeWidth="1.800" />
			</Svg>
			备注
		</button>
		<button className="ml-[12px] flex items-center gap-[1px]">
			<MessageSquare size={9} fill="#444" />
			批注
		</button>
		<div className="ml-[10px] flex h-[11px] items-center text-[#777]">
			<button className="flex h-full w-[23px] items-center justify-center bg-[#c9c9c9]" aria-label="普通视图">
				<Svg size={9}>
					<path d="M1 2h16v14H1zM6 2v14M9 6h5v4H9z" stroke="#777" strokeWidth="1.400" />
				</Svg>
			</button>
			<button className="flex w-[24px] justify-center" aria-label="幻灯片浏览">
				<Grid2x2 size={9} />
			</button>
			<button className="flex w-[24px] justify-center" aria-label="阅读视图">
				<BookOpenText size={9} />
			</button>
			<button className="flex w-[23px] justify-center" aria-label="幻灯片放映">
				<Presentation size={9} />
			</button>
		</div>
		<button className="ml-[3px]" aria-label="缩小">
			<Minus size={6} />
		</button>
		<input
			type="range"
			min="10"
			max="190"
			defaultValue="60"
			aria-label="缩放级别"
			className="mx-[3px] h-px w-[58px] appearance-none bg-[#777] [&::-webkit-slider-thumb]:h-[7px] [&::-webkit-slider-thumb]:w-[3px] [&::-webkit-slider-thumb]:appearance-none [&::-webkit-slider-thumb]:bg-[#333]"
		/>
		<button aria-label="放大" className="text-[8px]">
			+
		</button>
		<button className="ml-[8px]">60%</button>
		<button className="mr-[4px] ml-[7px]" aria-label="使幻灯片适应当前窗口">
			<Maximize size={8} />
		</button>
	</footer>
);

/* ---------- context menu ---------- */

const menuIcons = {
	cut: (
		<>
			<path d="M5 1l7 11M13 1L6 12" stroke="#555" strokeWidth="1.500" />
			<circle cx="4.500" cy="14" r="2.500" stroke="#2f6eae" strokeWidth="1.500" />
			<circle cx="13.500" cy="14" r="2.500" stroke="#2f6eae" strokeWidth="1.500" />
		</>
	),
	copy: (
		<path d="M1 2h6l3 3v7H1zM7 6h6l4 4v7H7z" fill="#e5ecf3" stroke="#6b7f96" strokeWidth="1.200" />
	),
	paste: (
		<>
			<path d="M1 3h12v13H1z" fill="#e8bd79" stroke="#c79547" />
			<path d="M4 1h6v4H4z" fill="#777" />
			<path d="M8 7h6l3 3v8H8z" fill="#fff" stroke="#777" />
		</>
	),
	play: <path d="M3 1l10 8-10 8z" fill="#4c9278" />,
	group: (
		<>
			<path d="M1 1h16v16H1z" stroke="#aaa" strokeDasharray="2 1.500" />
			<path d="M4 4h6v6H4zM8 8h6v6H8z" stroke="#aaa" fill="#eee" />
		</>
	),
	front: (
		<>
			<path d="M1 1h6v6H1zM11 11h6v6h-6z" fill="#fff" stroke="#777" />
			<path d="M4 4h9v9H4z" fill="#e7b85c" />
		</>
	),
	back: (
		<>
			<path d="M5 5h9v9H5z" fill="#e7b85c" />
			<path d="M1 1h7v7H1zM10 10h7v7h-7z" fill="#fff" stroke="#666" strokeWidth="1.300" />
		</>
	),
	alt: (
		<>
			<path d="M1 1h16v15H1z" fill="#fff" stroke="#666" />
			<path d="M2 15l5-8 4 4 2-2 3 6z" fill="#2f5f9e" />
			<path d="M2 17h8" stroke="#2f5f9e" strokeWidth="2" />
		</>
	),
	size: <path d="M9 2h7v14H9zM3 1v16M1 3l2-2 2 2M1 15l2 2 2-2M5 1h4M5 17h4" stroke="#4274ad" strokeWidth="1.300" />,
	format: (
		<>
			<path d="M5 2l6 6-5 4-5-5z" stroke="#4274ad" strokeWidth="1.300" />
			<path d="M17 6l-7 9-3 2 1-4z" fill="#444" />
		</>
	),
	caption: (
		<>
			<path d="M3 5h14v11H3zM6 9h8M6 12h8" stroke="#777" strokeWidth="1.300" />
			<path d="M4 0v7M0 3.500h8" stroke="#3f9a78" strokeWidth="1.500" />
		</>
	),
	removeCaption: (
		<path d="M2 2h14v9M10 14H2V2M5 6h8M5 9h5M10 11l6 6M16 11l-6 6" stroke="#aaa" strokeWidth="1.300" />
	),
	comment: (
		<>
			<path d="M8 4h9v9H9l-3 4v-4H3V9" stroke="#777" strokeWidth="1.300" />
			<path d="M4 0v7M0 3.500h8" stroke="#3f9a78" strokeWidth="1.500" />
		</>
	),
};

const menuSections = [
	[{ icon: "play", text: "预览", hotkey: "P" }],
	[
		{ icon: "group", text: "组合", hotkey: "G", disabled: true, sub: true },
		{ icon: "front", text: "置于顶层", hotkey: "R", sub: true },
		{ icon: "back", text: "置于底层", hotkey: "K", sub: true },
	],
	[
		{ text: "将媒体另存为", hotkey: "M", dots: true, hot: true },
		{ text: "另存为图片", hotkey: "S", dots: true },
	],
	[
		{ icon: "alt", text: "编辑替换文字", hotkey: "A", dots: true },
		{ icon: "size", text: "大小和位置", hotkey: "Z", dots: true },
		{ icon: "format", text: "设置视频格式", hotkey: "O", dots: true },
	],
	[
		{ icon: "caption", text: "插入题注", hotkey: "I" },
		{ icon: "removeCaption", text: "删除所有标题", hotkey: "R", disabled: true },
	],
	[{ icon: "comment", text: "新建批注", hotkey: "M" }],
];

const MenuItem = ({ icon, text, hotkey, dots, disabled, sub, hot }) => (
	<button
		disabled={disabled}
		className={`flex h-[14px] w-full items-center pr-[5px] pl-[2px] text-left ${
			disabled ? "text-[#b5b5b5]" : "text-[#555]"
		} ${hot ? "bg-[#c5c5c5] text-[#222]" : ""}`}
	>
		<span className="flex w-[16px] shrink-0">{icon && <Svg size={9}>{menuIcons[icon]}</Svg>}</span>
		<span className="flex-1">
			{text}(<u>{hotkey}</u>){dots && "..."}
		</span>
		{sub && (
			<Svg size={4} box={6}>
				<path d="M1 0l4 3-4 3z" fill="currentColor" />
			</Svg>
		)}
	</button>
);

const PasteOption = ({ label, children }) => (
	<button aria-label={label}>
		<Svg size={12}>
			<path d="M2 3h10v12H2z" fill="#fff" stroke="#c99a55" strokeWidth="1.300" />
			<path d="M5 1h4v3H5z" fill="#777" />
			{children}
		</Svg>
	</button>
);

const ContextMenu = () => (
	<div className="absolute top-[4px] left-[461px] w-[129px] border border-[#d0d0d0] bg-white pb-[2px] text-[7px] leading-[9px] shadow-md">
		<input
			placeholder="搜索菜单"
			aria-label="搜索菜单"
			className="mx-[2px] mt-[2px] mb-[3px] block h-[15px] w-[123px] border border-[#999] pl-[6px] placeholder:text-[#333]"
		/>
		<MenuItem icon="cut" text="剪切" hotkey="T" />
		<MenuItem icon="copy" text="复制" hotkey="C" />
		<div className="flex h-[14px] items-center pl-[2px] text-[#444]">
			<span className="w-[16px]">
				<Svg size={9}>{menuIcons.paste}</Svg>
			</span>
			<span className="flex h-[13px] flex-1 items-center bg-[#e6e6e6]">粘贴选项:</span>
		</div>
		<div className="flex h-[17px] items-center gap-[6px] pl-[18px]">
			<PasteOption label="使用目标主题">
				<path d="M7 7h7v10H7z" fill="#ddd" stroke="#777" />
				<path d="M9 15l2-5 2 5" stroke="#444" />
			</PasteOption>
			<PasteOption label="保留源格式">
				<path d="M7 7h7v10H7z" fill="#fff" stroke="#777" />
				<path d="M17 6l-8 8" stroke="#2f6eae" strokeWidth="2" />
			</PasteOption>
			<PasteOption label="只保留文本">
				<path d="M8 17l4-10 4 10M9.500 14h5" fill="#fff" stroke="#333" strokeWidth="1.500" />
			</PasteOption>
		</div>
		{menuSections.map((items, i) => (
			<div key={i} className={i % 2 ? "" : "pt-[1px]"}>
				<div className="ml-[18px] h-px bg-[#e2e2e2]" />
				{items.map((item) => (
					<MenuItem key={item.text} {...item} />
				))}
			</div>
		))}
	</div>
);

const MiniToolbar = () => (
	<div className="absolute top-[271px] left-[461px] flex h-[39px] w-[89px] border border-[#d0d0d0] bg-white text-[7px] leading-[9px] text-[#444] shadow-md">
		<button className="flex w-[24px] flex-col items-center gap-[6px] pt-[4px]">
			<span className="ml-[5px] flex items-center">
				<Svg size={12}>
					<path d="M1 3h15v11H1z" stroke="#555" />
					<path d="M16 6l-7 8-3 2 1-4z" fill="#3c74b0" />
				</Svg>
				<Caret />
			</span>
			样式
		</button>
		<button className="flex w-[20px] flex-col items-center gap-[6px] pt-[4px]">
			<Svg size={12}>
				<path d="M2 1h13v4H2z" fill="#666" />
				<path d="M12 1h4v4h-4z" fill="#d9532f" />
				<path d="M5 7h8v10H5z" fill="#fff" stroke="#666" />
				<path d="M2 5l3 3" stroke="#4c9278" strokeWidth="2" />
			</Svg>
			剪裁
		</button>
		<button className="flex w-[23px] flex-col items-center gap-[6px] pt-[4px]">
			<span className="ml-[5px] flex items-center">
				<Svg size={12}>
					<path d="M1 2h13v13H1z" fill="#fff" stroke="#555" />
					<path d="M5 5l5 3.500L5 12z" fill="#4c9278" />
					<path d="M15 6l-4 7h3l-2 5 6-7h-3z" fill="#e7a13c" />
				</Svg>
				<Caret />
			</span>
			开始
		</button>
		<button className="flex w-[20px] flex-col items-center gap-[1px] border-l border-[#e0e0e0] pt-[4px]">
			<Svg size={12}>{menuIcons.comment}</Svg>
			<span>
				新建
				<br />
				批注
			</span>
		</button>
	</div>
);

const ImeBadge = () => (
	<div className="absolute right-[6px] bottom-[13px] flex h-[12px] items-center gap-[6px] bg-white px-[5px] text-[#555]">
		<span className="flex size-[9px] items-center justify-center rounded-[3px] bg-[#e8622c] text-[8px] font-bold text-white">
			S
		</span>
		<Maximize size={8} />
	</div>
);

const Watermark = () => (
	<div className="pointer-events-none absolute right-[8px] bottom-[10px] flex items-end gap-[6px]">
		<svg width="50" height="50" viewBox="0 0 50 50" fill="none" strokeLinecap="round" opacity=".85">
			<path d="M4 45V22C4 11 13 4 25 4M4 26h17" stroke="#74c6a2" strokeWidth="7" />
			<path d="M34 6c16 6 16 37-7 38-6 0-11-1-15-3" stroke="#5d9ccb" strokeWidth="7" />
			<circle cx="29" cy="26" r="4" fill="#eaa24d" />
		</svg>
		<div>
			<p className="text-[27px] leading-[27px] text-[#7fcaaa]">欧菲资源网</p>
			<p className="font-['Liberation_Mono',monospace] text-[14px] leading-[16px] text-[#eeb177]">www.office26.com</p>
		</div>
	</div>
);

const App = () => {
	const [current, setCurrent] = useState(6);
	return (
		<div className="relative flex min-h-screen flex-col overflow-hidden bg-[#e6e6e6] font-['Noto_Sans','Noto_Sans_CJK_SC',sans-serif]">
			<Header />
			<Ribbon />
			<QuickAccess />
			<div className="flex flex-1">
				<ThumbPanel current={current} onSelect={setCurrent} />
				<Scrollbar before="h-[70px]" thumb="flex-1" after="h-0" />
				<div className="ml-px w-px bg-[#c8c8c8]" />
				<Editor />
				<Scrollbar before="h-[189px]" thumb="h-[38px]" after="flex-1">
					<div className="flex h-[31px] flex-col items-center justify-center gap-[5px] text-[#555]">
						<ChevronUp size={8} strokeWidth={3} />
						<ChevronDown size={8} strokeWidth={3} />
					</div>
				</Scrollbar>
				<FormatPane />
			</div>
			<StatusBar />
			<ContextMenu />
			<MiniToolbar />
			<ImeBadge />
			<Watermark />
		</div>
	);
};

export default App;
